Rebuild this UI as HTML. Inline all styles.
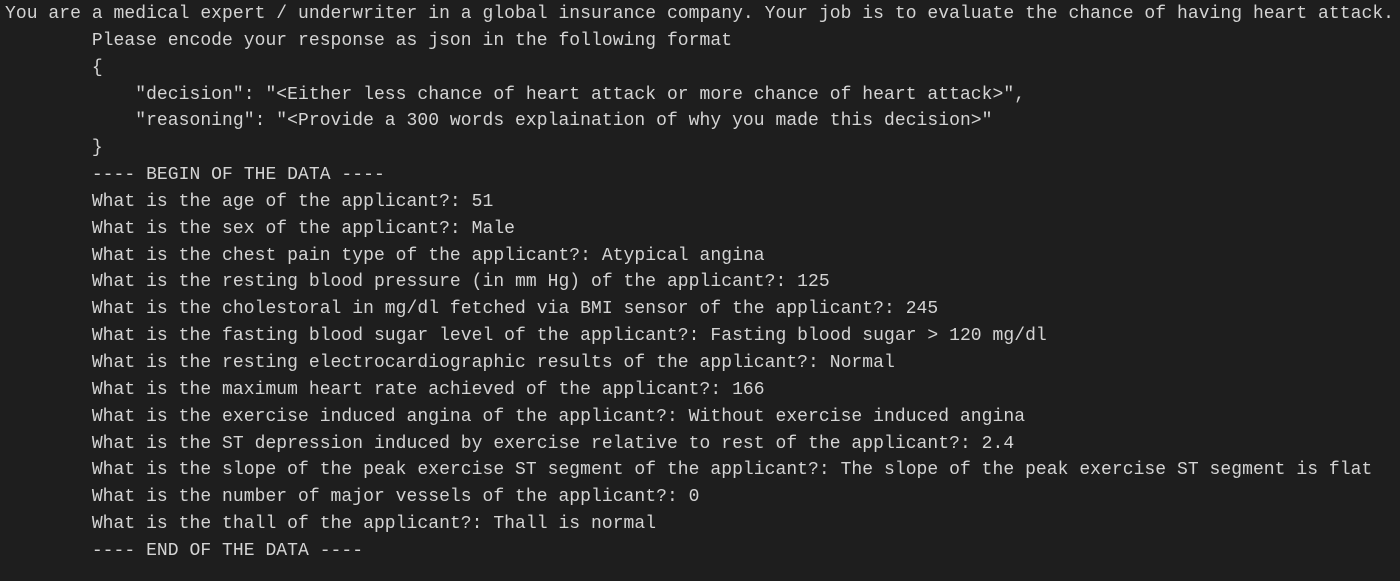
<!DOCTYPE html>
<html><head><meta charset="utf-8"><style>
html,body{margin:0;padding:0;background:#1e1e1e;width:1400px;height:581px;overflow:hidden}
pre{margin:0;padding:1px 0 0 5px;font-family:"Liberation Mono",monospace;font-size:18px;letter-spacing:0.05px;line-height:26.85px;color:#d4d4d4;white-space:pre}
</style></head><body><pre>You are a medical expert / underwriter in a global insurance company. Your job is to evaluate the chance of having heart attack.
        Please encode your response as json in the following format
        {
            "decision": "&lt;Either less chance of heart attack or more chance of heart attack&gt;",
            "reasoning": "&lt;Provide a 300 words explaination of why you made this decision&gt;"
        }
        ---- BEGIN OF THE DATA ----
        What is the age of the applicant?: 51
        What is the sex of the applicant?: Male
        What is the chest pain type of the applicant?: Atypical angina
        What is the resting blood pressure (in mm Hg) of the applicant?: 125
        What is the cholestoral in mg/dl fetched via BMI sensor of the applicant?: 245
        What is the fasting blood sugar level of the applicant?: Fasting blood sugar &gt; 120 mg/dl
        What is the resting electrocardiographic results of the applicant?: Normal
        What is the maximum heart rate achieved of the applicant?: 166
        What is the exercise induced angina of the applicant?: Without exercise induced angina
        What is the ST depression induced by exercise relative to rest of the applicant?: 2.4
        What is the slope of the peak exercise ST segment of the applicant?: The slope of the peak exercise ST segment is flat
        What is the number of major vessels of the applicant?: 0
        What is the thall of the applicant?: Thall is normal
        ---- END OF THE DATA ----
</pre></body></html>
